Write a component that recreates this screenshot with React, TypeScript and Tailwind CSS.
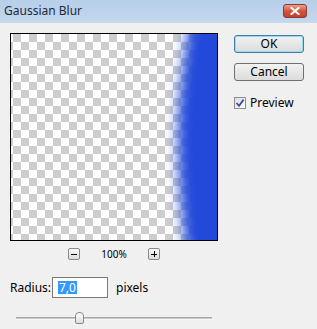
import React from "react";

function PreviewArt() {
  return (
    <svg width="206" height="206" viewBox="0 0 206 206" className="block">
      <defs>
        <pattern id="chk" width="16" height="16" patternUnits="userSpaceOnUse" x="2" y="0">
          <rect width="16" height="16" fill="#ffffff" />
          <rect width="8" height="8" fill="#cdcdcd" />
          <rect x="8" y="8" width="8" height="8" fill="#cdcdcd" />
        </pattern>
        <filter id="blur" x="-50%" y="-10%" width="200%" height="120%">
          <feGaussianBlur stdDeviation="6.5 0" />
        </filter>
      </defs>
      <rect width="206" height="206" fill="url(#chk)" />
      <path
        d="M180 -20 Q166 60 167 110 Q168 170 177 230 L260 230 L260 -20 Z"
        fill="#2148da"
        filter="url(#blur)"
      />
    </svg>
  );
}

export default function App() {
  const font = { fontFamily: '"Noto Sans", "Open Sans", sans-serif' };
  return (
    <div className="w-[317px] h-[329px] bg-[#f0f0f0] overflow-hidden text-black" style={font}>
      {/* Title bar */}
      <div className="h-[23px] flex items-center justify-between pl-[4px] pr-[10px] bg-gradient-to-b from-[#b7cfe9] to-[#c3d7ed] border-b border-[#c9d9ea]">
        <span className="text-[12px] text-[#1e2a3a] leading-none">Gaussian Blur</span>
        <div className="w-[24px] h-[14px] rounded-[3px] border border-[#8a3a32] bg-gradient-to-b from-[#e8a090] via-[#d2553f] to-[#c4402e] flex items-center justify-center">
          <svg width="10" height="8" viewBox="0 0 10 8">
            <path d="M1.5 1 L8.5 7 M8.5 1 L1.5 7" stroke="#ffffff" strokeWidth="2" strokeLinecap="square" />
          </svg>
        </div>
      </div>

      <div className="flex pt-[10px] pl-[10px]">
        {/* Left column */}
        <div className="flex flex-col w-[208px]">
          <div className="w-[208px] h-[208px] border border-black">
            <PreviewArt />
          </div>
          <div className="flex items-center justify-center gap-[20px] mt-[7px] h-[12px]">
            <div className="w-[12px] h-[12px] border border-[#8a8a8a] rounded-[2px] bg-gradient-to-b from-[#fbfbfb] to-[#dcdcdc] flex items-center justify-center">
              <div className="w-[6px] h-[1px] bg-black" />
            </div>
            <span className="w-[28px] text-center text-[10px] leading-none">100%</span>
            <div className="w-[12px] h-[12px] border border-[#8a8a8a] rounded-[2px] bg-gradient-to-b from-[#fbfbfb] to-[#dcdcdc] relative">
              <div className="absolute left-[2px] top-[5px] w-[6px] h-[1px] bg-black" />
              <div className="absolute left-[5px] top-[2px] w-[1px] h-[6px] bg-black" />
            </div>
          </div>

          <div className="flex items-center mt-[17px] h-[21px]">
            <span className="text-[12px] leading-none w-[42px]">Radius:</span>
            <div className="w-[56px] h-[21px] border border-[#7a7a7a] bg-white flex items-center pl-[5px]">
              <span className="bg-[#3399ff] text-white text-[12px] leading-[13px] px-[1px]">7,0</span>
            </div>
            <span className="text-[12px] leading-none ml-[8px]">pixels</span>
          </div>

          <div className="relative mt-[14px] ml-[6px] w-[196px] h-[12px]">
            <div className="absolute left-0 right-0 top-[5px] h-[3px] bg-[#c8c8c8] border-t border-[#a8a8a8] border-b border-b-[#f8f8f8]" />
            <div className="absolute left-[59px] top-0 w-[9px] h-[12px] rounded-t-[4px] rounded-b-[2px] border border-[#8a8a8a] bg-gradient-to-b from-[#ffffff] to-[#dcdcdc]" />
          </div>
        </div>

        {/* Right column */}
        <div className="flex flex-col ml-[16px] pt-[2px] w-[70px]">
          <div className="h-[18px] rounded-[3px] border border-[#3c7fb1] bg-gradient-to-b from-[#f2f2f2] to-[#dcdcdc] shadow-[inset_0_0_0_1px_#9ad8f0] flex items-center justify-center text-[12px] leading-none">
            OK
          </div>
          <div className="h-[18px] mt-[10px] rounded-[3px] border border-[#707070] bg-gradient-to-b from-[#f2f2f2] to-[#dcdcdc] flex items-center justify-center text-[12px] leading-none">
            Cancel
          </div>
          <div className="flex items-center mt-[16px]">
            <div className="w-[12px] h-[12px] border border-[#8f8f8f] bg-gradient-to-br from-[#dcdcdc] to-[#ffffff] flex items-center justify-center">
              <svg width="10" height="10" viewBox="0 0 10 10">
                <path d="M1.5 5 L4 7.8 L8.6 1.6" stroke="#3a4fa8" strokeWidth="1.8" fill="none" />
              </svg>
            </div>
            <span className="ml-[4px] text-[12px] leading-none">Preview</span>
          </div>
        </div>
      </div>
    </div>
  );
}
